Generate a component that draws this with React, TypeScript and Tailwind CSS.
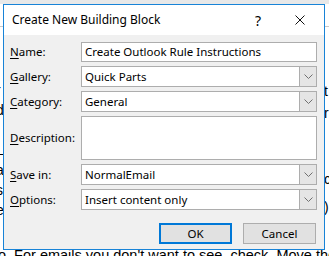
import React from 'react';

const font = { fontFamily: '"Segoe UI", "Noto Sans", sans-serif' };

const Chevron: React.FC = () => (
  <svg width="9" height="5" viewBox="0 0 9 5" fill="none">
    <path d="M0.5 0.5 L4.5 4.5 L8.5 0.5" stroke="#707070" strokeWidth="1" />
  </svg>
);

const Label: React.FC<{ k: string; rest: string }> = ({ k, rest }) => (
  <span className="w-[71px] shrink-0 text-[11.5px] text-black">
    <span className="underline underline-offset-2">{k}</span>
    {rest}
  </span>
);

const TextField: React.FC<{ value?: string; h?: string }> = ({ value, h = 'h-[20px]' }) => (
  <div className={`flex-1 ${h} bg-white border border-[#adadad] flex items-center px-[3px] text-[11.5px] text-black`}>
    {value}
  </div>
);

const Select: React.FC<{ value: string }> = ({ value }) => (
  <div className="flex-1 h-[21px] bg-white border border-[#adadad] flex items-center text-[11.5px] text-black">
    <span className="flex-1 px-[3px]">{value}</span>
    <div className="w-[17px] h-[19px] bg-[#e5e5e5] border-l border-[#adadad] flex items-center justify-center">
      <Chevron />
    </div>
  </div>
);

const App: React.FC = () => {
  return (
    <div className="relative w-[329px] h-[256px] bg-white overflow-hidden">
      {/* document behind the dialog */}
      <div className="h-[4px] bg-[#e8e8e8]" />
      <div className="mt-[22px] h-px bg-[#c8c8c8]" />
      <div
        className="absolute left-[-2px] top-[245px] whitespace-nowrap text-[14.5px] text-black"
        style={{ fontFamily: '"Liberation Sans", Arial, sans-serif' }}
      >
        o. For emails you don't want to see, check. Move the
      </div>
      <div className="absolute left-[-4px] top-[80px] flex flex-col text-[14px] text-black leading-[20px]" style={{ fontFamily: '"Liberation Sans", sans-serif' }}>
        <span>r</span>
        <span>d</span>
        <span>l</span>
        <span>L</span>
        <span>a</span>
        <span>s:</span>
        <span>e</span>
      </div>
      <div className="absolute left-[324px] top-[80px] flex flex-col text-[14px] text-black leading-[22px]" style={{ fontFamily: '"Liberation Sans", sans-serif' }}>
        <span>t</span>
        <span>r</span>
        <span className="mt-[44px]">c</span>
        <span className="mt-[6px]">)</span>
      </div>

      {/* dialog */}
      <div
        className="absolute left-[3px] top-[4px] w-[322px] h-[246px] border border-[#1883d7] bg-[#f0f0f0] flex flex-col"
        style={font}
      >
        <div className="h-[30px] bg-white flex items-center pl-[8px] text-[12px] text-black">
          <span className="flex-1">Create New Building Block</span>
          <span className="w-[20px] text-center text-[14px] mr-[27px]">?</span>
          <svg className="mr-[19px]" width="10" height="10" viewBox="0 0 10 10">
            <path d="M0.5 0.5 L9.5 9.5 M9.5 0.5 L0.5 9.5" stroke="#111" strokeWidth="1" />
          </svg>
        </div>

        <div className="flex flex-col gap-[4px] pl-[6px] pr-[7px] pt-[7px]">
          <div className="flex items-center">
            <Label k="N" rest="ame:" />
            <TextField value="Create Outlook Rule Instructions" />
          </div>
          <div className="flex items-center">
            <Label k="G" rest="allery:" />
            <Select value="Quick Parts" />
          </div>
          <div className="flex items-center">
            <Label k="C" rest="ategory:" />
            <Select value="General" />
          </div>
          <div className="flex items-center">
            <Label k="D" rest="escription:" />
            <TextField h="h-[44px]" />
          </div>
          <div className="flex items-center">
            <Label k="S" rest="ave in:" />
            <Select value="NormalEmail" />
          </div>
          <div className="flex items-center">
            <Label k="O" rest="ptions:" />
            <Select value="Insert content only" />
          </div>
        </div>

        <div className="flex justify-end gap-[11px] pr-[8px] mt-[13px]">
          <button className="w-[73px] h-[21px] bg-[#e1e1e1] border-2 border-[#0078d7] text-[11.5px] text-black">
            OK
          </button>
          <button className="w-[73px] h-[21px] bg-[#e1e1e1] border border-[#adadad] text-[11.5px] text-black">
            Cancel
          </button>
        </div>
      </div>
    </div>
  );
};

export default App;
